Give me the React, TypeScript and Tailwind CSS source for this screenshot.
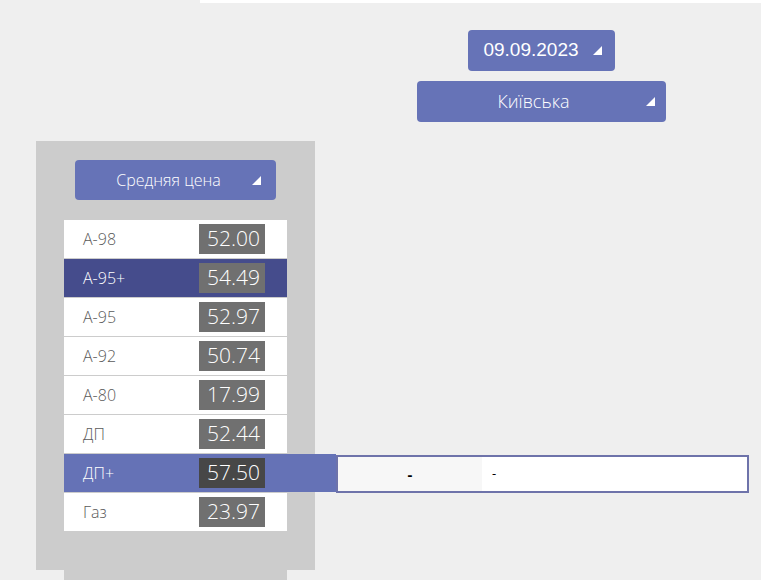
import React from 'react';

type Fuel = {
  name: string;
  price: string;
};

const fuels: Fuel[] = [
  { name: 'А-98', price: '52.00' },
  { name: 'А-95+', price: '54.49' },
  { name: 'А-95', price: '52.97' },
  { name: 'А-92', price: '50.74' },
  { name: 'А-80', price: '17.99' },
  { name: 'ДП', price: '52.44' },
  { name: 'ДП+', price: '57.50' },
  { name: 'Газ', price: '23.97' },
];

function Corner() {
  return (
    <svg width="9" height="9" viewBox="0 0 9 9" className="shrink-0">
      <polygon points="0,9 9,0 9,9" fill="#ffffff" />
    </svg>
  );
}

function FuelRow({ fuel, active, selected }: { fuel: Fuel; active: boolean; selected: boolean }) {
  const rowBg = selected ? 'bg-[#6572b6]' : active ? 'bg-[#454c8c]' : 'bg-white';
  const labelColor = selected || active ? 'text-white' : 'text-[#5a5a5a]';
  const boxBg = selected ? 'bg-[#474747]' : 'bg-[#707070]';

  return (
    <div className={`relative flex h-[38px] items-center ${rowBg}`}>
      <span className={`flex-1 pl-[19px] text-[16px] font-light ${labelColor}`}>{fuel.name}</span>
      <span className={`mr-[22px] flex h-[30px] w-[66px] items-center justify-end pr-[5px] text-[21px] font-light text-white ${boxBg}`}>
        {fuel.price}
      </span>
      {selected && (
        <div className="absolute left-[223px] top-0 flex h-[38px] items-center">
          <div className="h-[38px] w-[49px] bg-[#6572b6]" />
          <div className="mt-[2px] flex h-[38px] w-[413px] border-2 border-[#6e73aa] bg-white text-black">
            <div className="flex w-[144px] items-center justify-center bg-[#f7f7f7] text-[15px] font-bold">-</div>
            <div className="flex flex-1 items-center pl-[10px] text-[13px]">-</div>
          </div>
        </div>
      )}
    </div>
  );
}

export default function App() {
  return (
    <div className="min-h-[580px] overflow-hidden bg-[#efefef] font-['Open_Sans',sans-serif]">
      <div className="ml-[200px] h-[3px] bg-white" />

      <div className="flex flex-col items-center gap-[10px] pl-[322px] pt-[27px]">
        <button className="flex h-[41px] w-[147px] items-center justify-center gap-[14px] rounded bg-[#6673b7] pl-[2px] font-['Liberation_Sans',sans-serif] text-[19px] text-white">
          09.09.2023
          <Corner />
        </button>
        <button className="relative flex h-[41px] w-[249px] items-center justify-center rounded bg-[#6673b7] pr-[16px] text-[18px] font-light text-white">
          Київська
          <span className="absolute right-[11px] top-[16px] flex">
            <Corner />
          </span>
        </button>
      </div>

      <div className="ml-[36px] mt-[19px] flex w-[279px] flex-col items-center bg-[#cccccc] pb-[39px] pt-[19px]">
        <button className="relative flex h-[40px] w-[201px] items-center justify-center rounded bg-[#6673b7] pr-[14px] text-[16px] font-light text-white">
          Средняя цена
          <span className="absolute right-[15px] top-[16px] flex">
            <Corner />
          </span>
        </button>
        <div className="mt-[20px] flex w-[223px] flex-col gap-[1px]">
          {fuels.map((fuel, i) => (
            <FuelRow key={fuel.name} fuel={fuel} active={i === 1} selected={i === 6} />
          ))}
        </div>
      </div>
      <div className="ml-[64px] h-[20px] w-[223px] bg-[#cccccc]" />
    </div>
  );
}
